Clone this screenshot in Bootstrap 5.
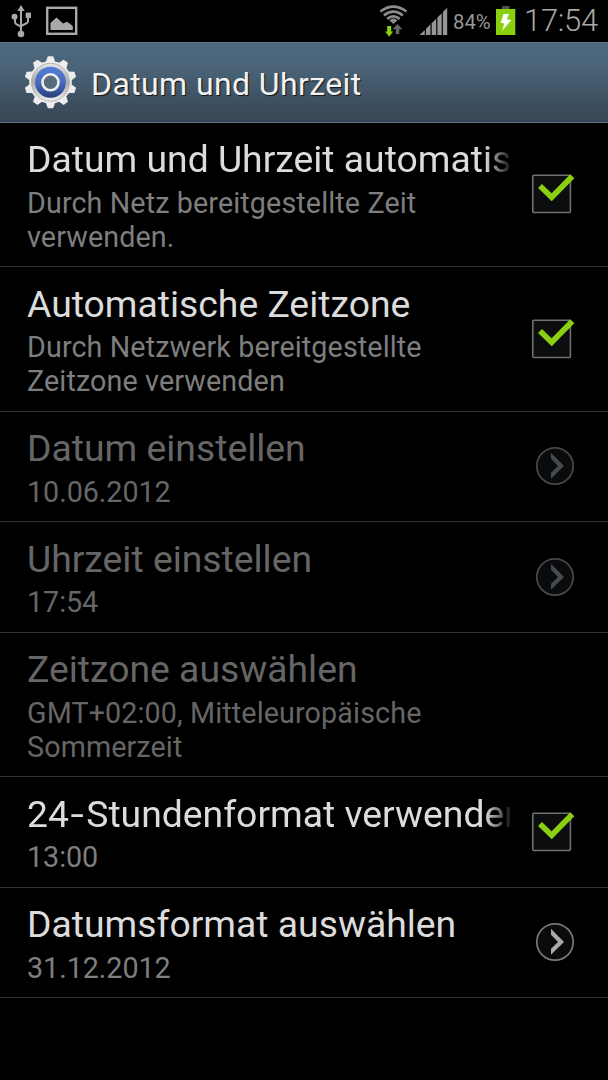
<!DOCTYPE html>
<html lang="de">
<head>
<meta charset="utf-8">
<meta name="viewport" content="width=device-width, initial-scale=1">
<title>Datum und Uhrzeit</title>
<link href="https://cdn.jsdelivr.net/npm/bootstrap@5.3.0/dist/css/bootstrap.min.css" rel="stylesheet">
<style>
body{background:#000;color:#dcdcdc;font-family:Roboto,"Liberation Sans",sans-serif;overflow:hidden}
svg{display:block;flex:none}
.statusbar{height:42px;color:#969696}
.battery-pct{width:38px;margin-left:3px;font-size:20.3px;line-height:24px;padding-top:2px;white-space:nowrap}
.clock{width:92px;padding-left:8px;font-size:31px;line-height:38px;letter-spacing:-.3px;font-weight:300;color:#a8a8a8}
.titlebar{height:80.5px;background:linear-gradient(#4d6980 0,#4a6478 30%,#3c4d5d 80%,#384755 100%);border-top:1px solid #58748b;border-bottom:1px solid #64737d;color:#f2f2f2}
.titlebar h1{font-size:32px;line-height:38px;letter-spacing:.4px;padding-top:4px;text-shadow:1px 1px 1px #111;font-weight:400}
.setting{padding:14.8px 27px 0;height:110.5px;border-bottom:1px solid #303030!important}
.setting.tall{height:144.5px}
.caption-line{width:484px;font-size:37.3px;line-height:44px;margin-bottom:4px;white-space:nowrap;overflow:hidden}
.caption-line.fade-end{-webkit-mask-image:linear-gradient(90deg,#000 458px,transparent 486px);mask-image:linear-gradient(90deg,#000 458px,transparent 486px)}
.dash{display:inline-block;width:17.3px;transform:translateX(1.5px) scaleX(1.3);transform-origin:0 50%}
.summary{font-size:28.7px;line-height:34px;letter-spacing:.12px;padding-top:.6px;color:#7e7e7e}
.summary.digits{letter-spacing:-.05px}
.off,.off .summary{color:#666}
.control{margin:-15px 0 0 20px}
</style>
</head>
<body>
<svg width="0" height="0" class="position-absolute">
  <defs>
    <linearGradient id="rim" x1="0" y1="0" x2="0" y2="1"><stop offset="0" stop-color="#e4e4e4"/><stop offset=".5" stop-color="#aaa"/><stop offset="1" stop-color="#eee"/></linearGradient>
    <linearGradient id="blue" x1="0" y1="0" x2="0" y2="1"><stop offset="0" stop-color="#527ed8"/><stop offset=".5" stop-color="#486cc0"/><stop offset="1" stop-color="#263f78"/></linearGradient>
    <symbol id="check" viewBox="0 0 44 42"><rect x="1.8" y="2.3" width="37.6" height="37.2" rx="1" fill="#0b0d0f" stroke="#707070" stroke-width="1.6"/><path d="M9 13 20.7 24.2 41.3 3.2" fill="none" stroke="#8bd010" stroke-width="5.6"/></symbol>
    <symbol id="arrow" viewBox="0 0 44 42"><circle cx="24" cy="21" r="18.2" fill="#090b0d" stroke="currentColor" stroke-width="1.7"/><path d="M20 7.8 33 21 20 33.8V27.8L27 21 20 13.8Z" fill="var(--tip)"/></symbol>
  </defs>
</svg>

<header class="statusbar d-flex align-items-center">
  <svg width="90" height="42" fill="none" stroke="#a9a9a9" stroke-width="1.7">
    <path d="M21 9V33M15 18V22Q15 24 18 25L21 27M28 17V21Q28 23 25 24L21 26" stroke-width="2"/>
    <g fill="#a9a9a9" stroke="none"><path d="M21 5 24.7 11H17.3Z"/><circle cx="14.5" cy="16.7" r="3"/><path d="M25.7 12.6H31V18H25.7Z"/><circle cx="21" cy="34" r="3.3"/></g>
    <rect x="47.2" y="7.8" width="29" height="26" stroke-width="2.4"/>
    <path d="M50.5 30V23L56.5 17.5 63 23.5 67 21.8 72.8 26V30Z" fill="#a9a9a9" stroke="none"/>
  </svg>
  <svg class="ms-auto" width="73" height="42" viewBox="2.5 0 73 42" fill="none" stroke="#8c8c8c">
    <g stroke-width="2.7" transform="translate(-.6 -.7)"><path d="M6.5 12.2Q19.5 2.3 32.5 12.2"/><path d="M10 16Q19.5 8.8 29 16"/><path d="M13.2 19.5Q19.5 14.8 25.8 19.5"/></g>
    <path d="M14.8 20.2Q18.9 17 23 20.2L18.9 24Z" fill="#8c8c8c" stroke="none"/>
    <path d="M12.7 26H16.7V31.5H18.7L14.7 36.7 10.6 31.5H12.7Z" fill="#8bd010" stroke="none"/>
    <path d="M23 24 28 29.3H24.8V34H21.3V29.3H18Z" fill="#666" stroke="none"/>
    <g fill="#969696" stroke="none"><path d="M45 35 50.3 30V35Z"/><path d="M51.5 28.8 56 24.3V35H51.5Z"/><path d="M57.2 23.2 61.7 18.7V35H57.2Z"/><path d="M62.9 17.5 67.2 13.2V35H62.9Z"/><path d="M68.4 12 72.7 7.8V35H68.4Z"/></g>
  </svg>
  <span class="battery-pct">84%</span>
  <svg width="25" height="42"><path d="M11 6H18.5V9H11Z" fill="#505050"/><path d="M5 9H24.3V35H5Z" fill="#8bd010"/><path d="M12.5 14H18L15.8 19.3 20.3 20 11 31 13.3 23.5 9.8 22.8Z" fill="#fff"/></svg>
  <span class="clock">17:54</span>
</header>

<div class="titlebar d-flex align-items-center">
  <svg width="91" height="78" viewBox="0 0 91 78">
    <g transform="translate(50.5 39.3)" fill="#ededed">
      <path id="tooth" d="M-4.8-20-2.7-26H2.7L4.8-20V20L2.7 26H-2.7L-4.8 20Z"/><use href="#tooth" transform="rotate(36)"/><use href="#tooth" transform="rotate(72)"/><use href="#tooth" transform="rotate(108)"/><use href="#tooth" transform="rotate(144)"/>
      <circle r="21.3"/><circle r="19" fill="url(#rim)" stroke="#aaa" stroke-width=".8"/>
      <circle r="15.5" fill="url(#blue)"/><circle r="8" fill="#566c7c" stroke="#eee" stroke-width="2.6"/>
    </g>
  </svg>
  <h1 class="m-0">Datum und Uhrzeit</h1>
</div>

<main>
  <section class="setting tall d-flex border-bottom">
    <div><div class="caption-line fade-end">Datum und Uhrzeit automatis</div><div class="summary">Durch Netz bereitgestellte Zeit<br>verwenden.</div></div>
    <svg class="control align-self-center" width="44" height="42"><use href="#check"/></svg>
  </section>
  <section class="setting tall d-flex border-bottom">
    <div><div class="caption-line">Automatische Zeitzone</div><div class="summary">Durch Netzwerk bereitgestellte<br>Zeitzone verwenden</div></div>
    <svg class="control align-self-center" width="44" height="42"><use href="#check"/></svg>
  </section>
  <section class="setting off d-flex border-bottom">
    <div><div class="caption-line">Datum einstellen</div><div class="summary digits">10.06.2012</div></div>
    <svg class="control align-self-center" style="color:#484848;--tip:#454950" width="44" height="42"><use href="#arrow"/></svg>
  </section>
  <section class="setting off d-flex border-bottom">
    <div><div class="caption-line">Uhrzeit einstellen</div><div class="summary digits">17:54</div></div>
    <svg class="control align-self-center" style="color:#484848;--tip:#454950" width="44" height="42"><use href="#arrow"/></svg>
  </section>
  <section class="setting tall off d-flex border-bottom">
    <div><div class="caption-line">Zeitzone auswählen</div><div class="summary">GMT+02:00, Mitteleuropäische<br>Sommerzeit</div></div>
  </section>
  <section class="setting d-flex border-bottom">
    <div><div class="caption-line fade-end">24<span class="dash">-</span>Stundenformat verwenden</div><div class="summary digits">13:00</div></div>
    <svg class="control align-self-center" width="44" height="42"><use href="#check"/></svg>
  </section>
  <section class="setting d-flex border-bottom">
    <div><div class="caption-line">Datumsformat auswählen</div><div class="summary digits">31.12.2012</div></div>
    <svg class="control align-self-center" style="color:#777;--tip:#aaa" width="44" height="42"><use href="#arrow"/></svg>
  </section>
</main>
<script src="https://cdn.jsdelivr.net/npm/bootstrap@5.3.0/dist/js/bootstrap.bundle.min.js"></script>
</body>
</html>
